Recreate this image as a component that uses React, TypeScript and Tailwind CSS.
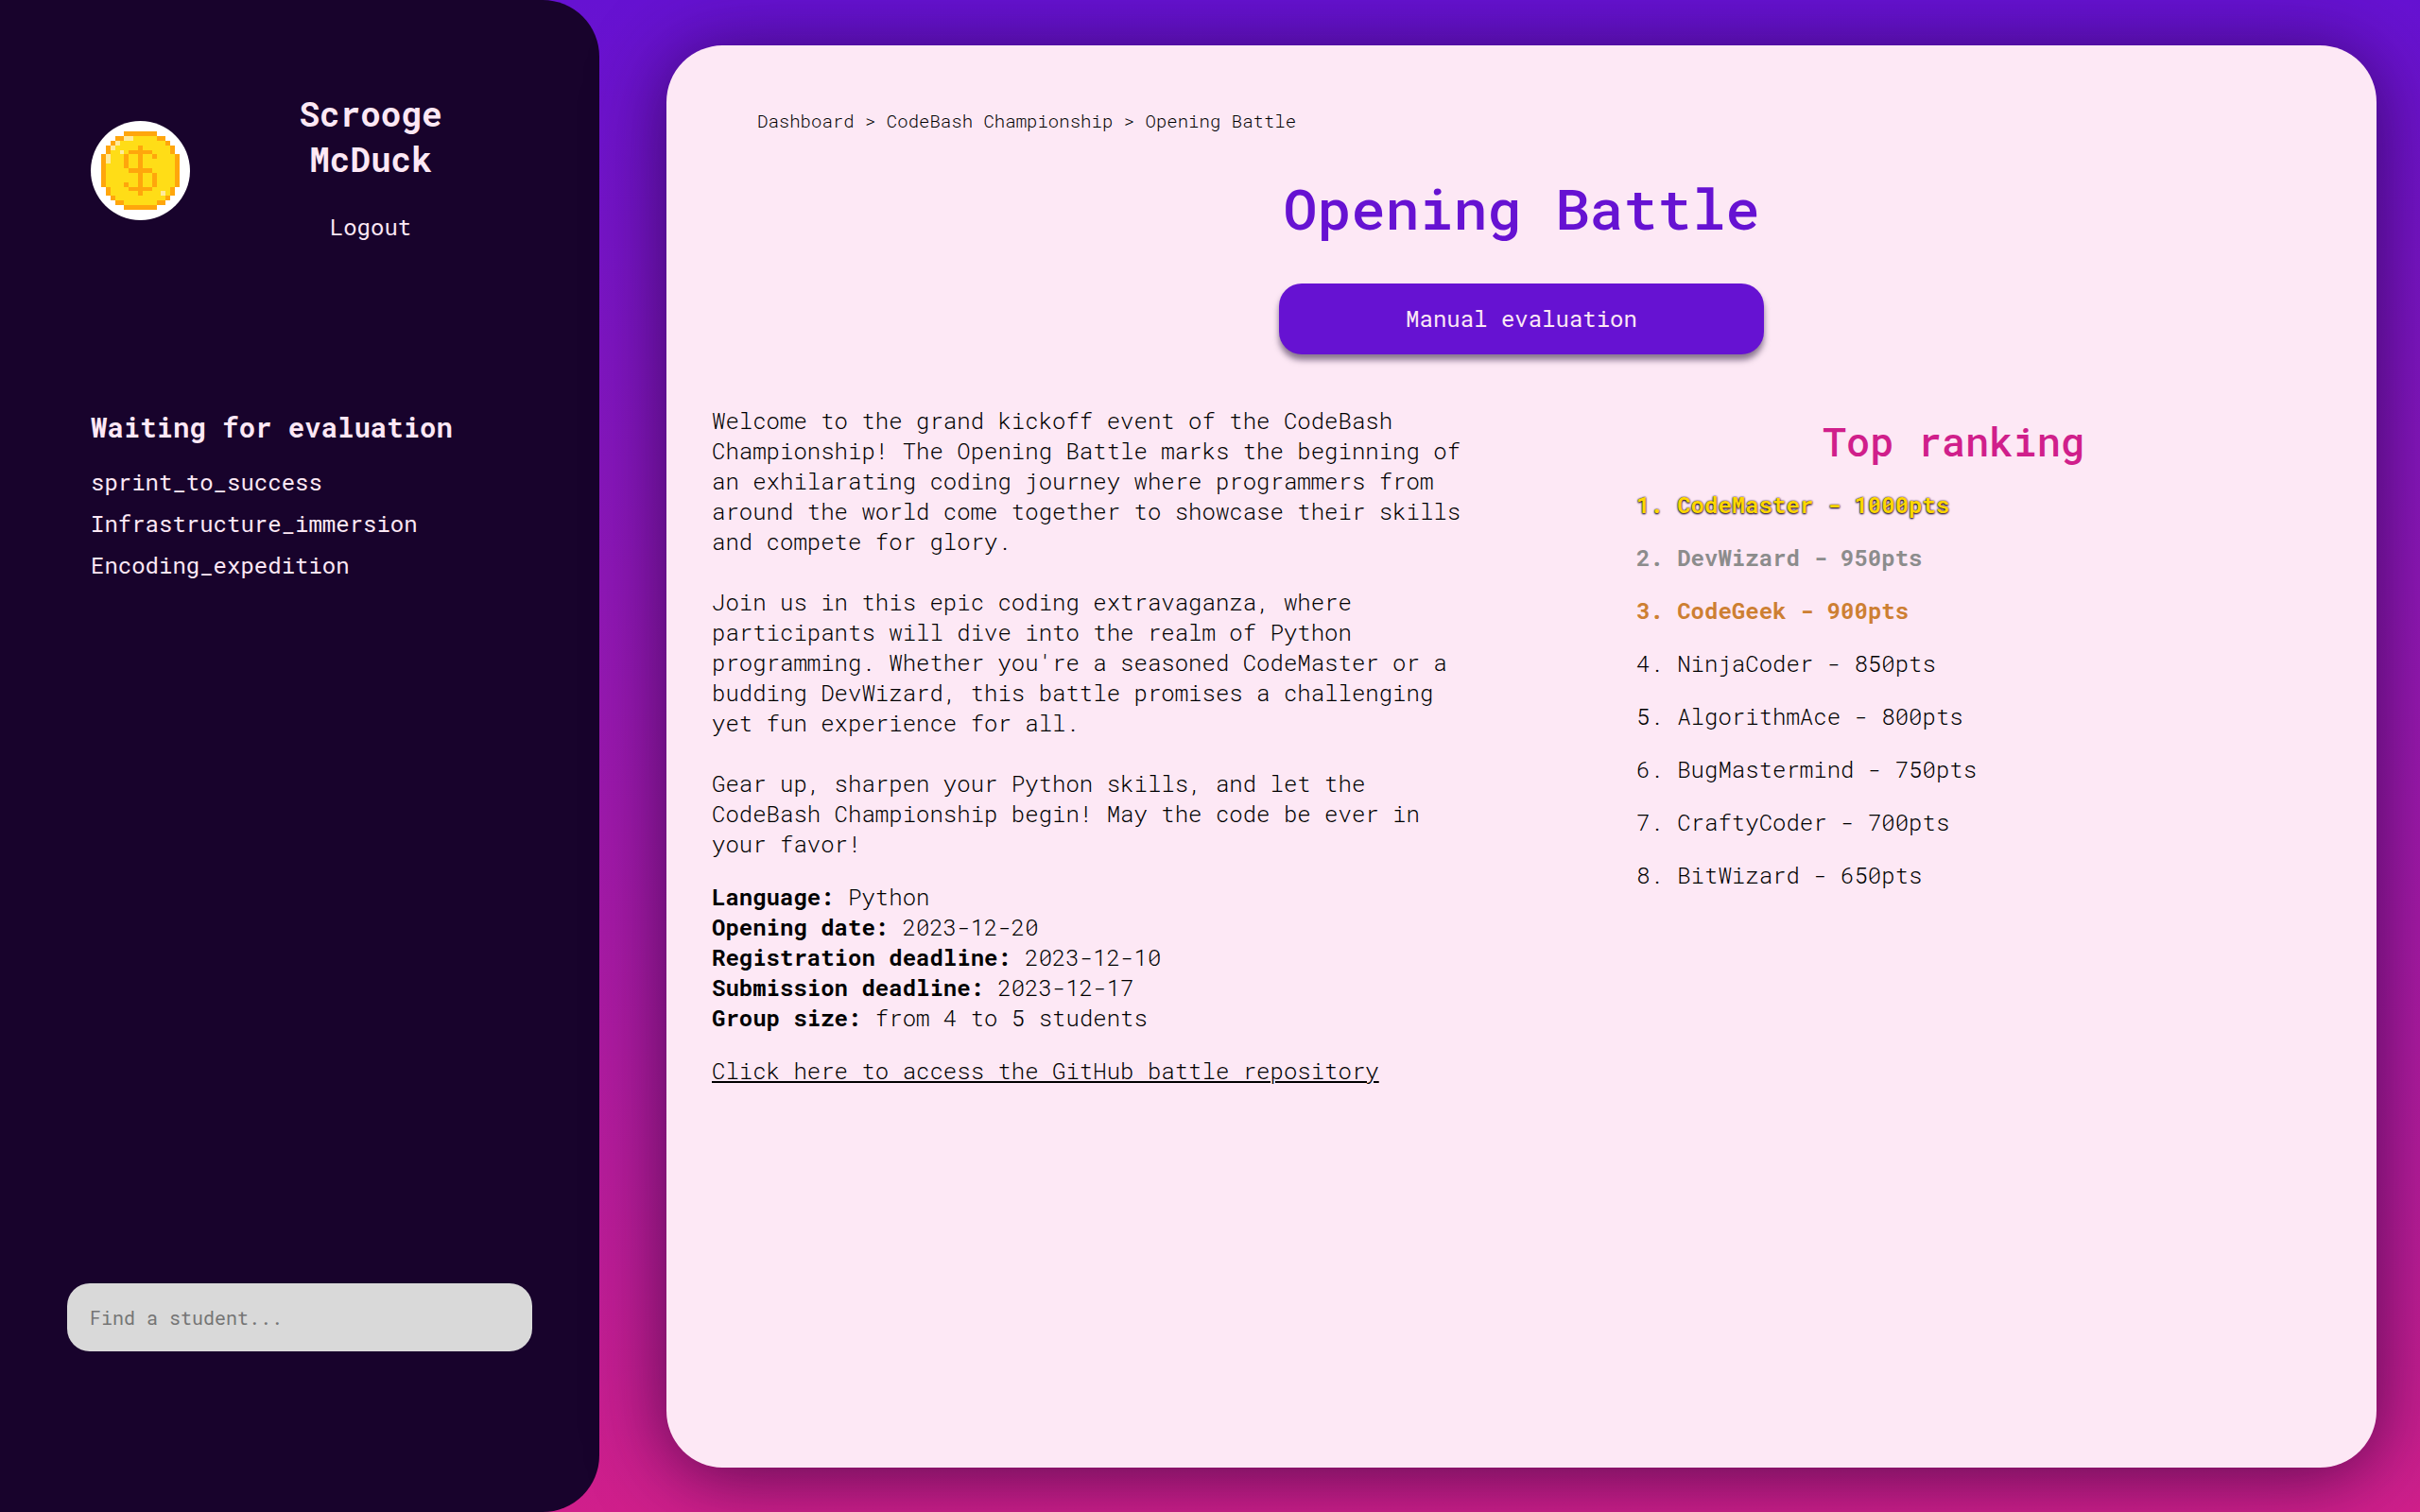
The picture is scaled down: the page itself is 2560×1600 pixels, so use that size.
const paragraphs = [
  "Welcome to the grand kickoff event of the CodeBash Championship! The Opening Battle marks the beginning of an exhilarating coding journey where programmers from around the world come together to showcase their skills and compete for glory.",
  "Join us in this epic coding extravaganza, where participants will dive into the realm of Python programming. Whether you're a seasoned CodeMaster or a budding DevWizard, this battle promises a challenging yet fun experience for all.",
  "Gear up, sharpen your Python skills, and let the CodeBash Championship begin! May the code be ever in your favor!",
];

const details = [
  { label: "Language:", value: "Python" },
  { label: "Opening date:", value: "2023-12-20" },
  { label: "Registration deadline:", value: "2023-12-10" },
  { label: "Submission deadline:", value: "2023-12-17" },
  { label: "Group size:", value: "from 4 to 5 students" },
];

const ranking = [
  { name: "CodeMaster", points: 1000, style: "font-bold text-[#ffd700] [text-shadow:0_1px_2px_#18032c,0_0_2px_#18032c]" },
  { name: "DevWizard", points: 950, style: "font-bold text-[#8c8c8c]" },
  { name: "CodeGeek", points: 900, style: "font-bold text-[#cd7f32]" },
  { name: "NinjaCoder", points: 850, style: "" },
  { name: "AlgorithmAce", points: 800, style: "" },
  { name: "BugMastermind", points: 750, style: "" },
  { name: "CraftyCoder", points: 700, style: "" },
  { name: "BitWizard", points: 650, style: "" },
];

const pending = ["sprint_to_success", "Infrastructure_immersion", "Encoding_expedition"];

function CoinAvatar() {
  return (
    <svg viewBox="-2.3 -2.3 21.6 21.6" className="size-[105px] shrink-0 rounded-full bg-white" role="img" aria-label="Gold coin" shapeRendering="crispEdges">
      <path fill="#ffdd17" d="M5 0h7v1h2v1h1v1h1v2h1v7h-1v2h-1v1h-1v1h-2v1H5v-1H3v-1H2v-1H1v-2H0V5h1V3h1V2h1V1h2z" />
      <path
        fill="#ffa60c"
        d="M5 0h7v1H5zM3 1h2v1H3zM12 1h2v1h-2zM2 2h1v1H2zM14 2h1v1h-1zM1 3h1v2H1zM15 3h1v2h-1zM0 5h1v7H0zM16 5h1v7h-1zM1 12h1v2H1zM15 12h1v2h-1zM2 14h1v1H2zM14 14h1v1h-1zM3 15h2v1H3zM12 15h2v1h-2zM5 16h7v1H5z"
      />
      <path fill="#ffa60c" d="M8 3h1v11H8zM6 4h5v1H6zM5 5h1v3H5zM11 5h1v1h-1zM6 8h5v1H6zM11 9h1v3h-1zM5 11h1v1H5zM6 12h5v1H6z" />
      <path fill="#ffeb9c" d="M5 1h2v1H5zM3 2h1v1H3zM2 3h1v1H2zM4 4h1v1H4zM1 5h1v2H1zM13 13h1v1h-1z" />
    </svg>
  );
}

function Sidebar() {
  return (
    <aside className="flex w-[634px] shrink-0 flex-col rounded-r-[60px] bg-[#18032c] text-[#fde8f5]">
      <div className="flex items-center gap-[45px] pt-24 pr-24 pl-24">
        <CoinAvatar />
        <div className="flex flex-1 flex-col items-center gap-8 pb-2 text-center">
          <h2 className="text-[36px] leading-12 font-bold">Scrooge McDuck</h2>
          <button type="button" className="cursor-pointer text-2xl leading-8">Logout</button>
        </div>
      </div>
      <nav aria-labelledby="pending-title" className="px-24 pt-42">
        <h3 id="pending-title" className="mb-4 text-[29px] leading-10 font-bold">Waiting for evaluation</h3>
        <ul>
          {pending.map((item) => (
            <li key={item} className="py-1.5 text-2xl leading-8">
              <a href="#">{item}</a>
            </li>
          ))}
        </ul>
      </nav>
      <div className="mt-auto px-[71px] pb-[170px]">
        <input
          type="search"
          aria-label="Find a student"
          placeholder="Find a student..."
          className="h-18 w-full rounded-3xl bg-[#d9d9d9] px-6 text-xl text-black placeholder:text-[#757575]"
        />
      </div>
    </aside>
  );
}

export default function App() {
  return (
    <div className="flex min-h-screen bg-linear-to-b/srgb from-[#6612d2] to-[#d01f8b] [font-family:'Roboto_Mono','Liberation_Mono',monospace]">
      <Sidebar />
      <main className="mt-12 mr-[46px] mb-[47px] ml-[71px] flex-1 rounded-[60px] bg-[#fde8f5] px-12 pt-16 text-black shadow-[0_8px_80px_rgba(24,3,44,0.65)]">
        <nav aria-label="Breadcrumb" className="px-12 text-[19px] leading-8 font-[350]">
          <a href="#">Dashboard</a> &gt; <a href="#">CodeBash Championship</a> &gt; <a href="#">Opening Battle</a>
        </nav>
        <h1 className="mt-9 text-center text-[60px] leading-20 font-medium text-[#6612d2]">Opening Battle</h1>
        <div className="mt-10 flex justify-center">
          <button type="button" className="h-[75px] w-[513px] cursor-pointer rounded-3xl bg-[#6612d2] pb-0.5 text-2xl text-[#fde8f5] shadow-[0_6px_6px_rgba(24,3,44,0.5)]">
            Manual evaluation
          </button>
        </div>
        <div className="mt-[54px] grid grid-cols-2 gap-[115px] text-2xl leading-8 font-[350]">
          <section aria-label="Description">
            <div className="flex flex-col gap-8">
              {paragraphs.map((text) => (
                <p key={text}>{text}</p>
              ))}
            </div>
            <dl className="mt-6">
              {details.map(({ label, value }) => (
                <div key={label}>
                  <dt className="inline font-bold">{label}</dt> <dd className="inline">{value}</dd>
                </div>
              ))}
            </dl>
            <p className="mt-6">
              <a href="#" className="underline decoration-2 underline-offset-2">Click here to access the GitHub battle repository</a>
            </p>
          </section>
          <section aria-labelledby="ranking-title" className="pt-[10px]">
            <h2 id="ranking-title" className="text-center text-[42px] leading-14 font-medium text-[#d01f8b]">Top ranking</h2>
            <ol className="mt-[23px] flex flex-col gap-6 pl-16">
              {ranking.map(({ name, points, style }, index) => (
                <li key={name} className={style}>
                  {index + 1}. {name} - {points}pts
                </li>
              ))}
            </ol>
          </section>
        </div>
      </main>
    </div>
  );
}
